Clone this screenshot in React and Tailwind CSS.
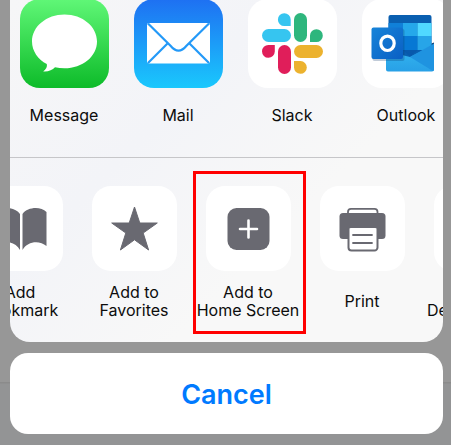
import React from "react";

function MessageIcon() {
  return (
    <svg viewBox="0 0 89 89" className="size-[89px]" aria-hidden="true">
      <defs>
        <linearGradient id="msg" x1="0" y1="0" x2="0" y2="1">
          <stop offset="0" stopColor="#60f777" />
          <stop offset="1" stopColor="#0dbb29" />
        </linearGradient>
      </defs>
      <rect width="89" height="89" rx="20" fill="url(#msg)" />
      <path
        d="M44.500 15.500C26.500 15.500 12 27.500 12 42.500C12 52 18 60.500 26.800 65C27.500 67.500 26 70.500 23.200 72.500C28 73 32.500 71 35 68.300C38 69 41.200 69.300 44.500 69.300C62.500 69.300 77 57.500 77 42.500S62.500 15.500 44.500 15.500Z"
        fill="#fff"
      />
    </svg>
  );
}

function MailIcon() {
  return (
    <svg viewBox="0 0 89 89" className="size-[89px]" aria-hidden="true">
      <defs>
        <linearGradient id="mail" x1="0" y1="0" x2="0" y2="1">
          <stop offset="0" stopColor="#1e70f2" />
          <stop offset="1" stopColor="#1ac8fd" />
        </linearGradient>
      </defs>
      <rect width="89" height="89" rx="20" fill="url(#mail)" />
      <rect x="13" y="24" width="63" height="40.500" rx="2" fill="#fff" />
      <g fill="none" stroke="#2399f8" strokeWidth="2.200">
        <path d="M14 24.500L36.500 46.700Q44.500 56.500 52.500 46.700L75 24.500" />
        <path d="M14 64L33.500 44.500M75 64L55.500 44.500" />
      </g>
    </svg>
  );
}

function SlackIcon() {
  return (
    <svg viewBox="0 0 89 89" className="size-[89px]" aria-hidden="true">
      <rect width="89" height="89" rx="20" fill="#fff" />
      <g fill="#36c5f0">
        <path d="M42.700 27H36.300A6.400 6.400 0 1 1 42.700 20.500Z" />
        <rect x="14" y="30" width="29" height="13" rx="6.500" />
      </g>
      <g fill="#2eb67d">
        <rect x="46" y="14" width="13" height="29" rx="6.500" />
        <path d="M62 43V36.500A6.400 6.400 0 1 1 68.400 43Z" />
      </g>
      <g fill="#e01e5a">
        <path d="M26.800 46V52.500A6.400 6.400 0 1 1 20.400 46Z" />
        <rect x="30" y="46" width="13" height="29" rx="6.500" />
      </g>
      <g fill="#ecb22e">
        <rect x="46" y="46" width="29" height="13" rx="6.500" />
        <path d="M46 62H52.500A6.400 6.400 0 1 1 46 68.500Z" />
      </g>
    </svg>
  );
}

function OutlookIcon() {
  return (
    <svg viewBox="0 0 89 89" className="size-[89px]" aria-hidden="true">
      <defs>
        <linearGradient id="olTile" x1="0" y1="0" x2="1" y2="1">
          <stop offset="0" stopColor="#1784d9" />
          <stop offset="1" stopColor="#0a5fc4" />
        </linearGradient>
        <linearGradient id="olFlap" x1="0" y1="0" x2="0" y2="1">
          <stop offset="0" stopColor="#35b8f1" />
          <stop offset="1" stopColor="#28a0e6" />
        </linearGradient>
      </defs>
      <rect width="89" height="89" rx="20" fill="#fff" />
      <path d="M68 45L72 43.500V50L68 52Z" fill="#123b6d" />
      <path d="M26.500 18A2 2 0 0 1 28.500 16H67.500A2 2 0 0 1 69.500 18V60H26.500Z" fill="#0a5fb0" />
      <path d="M26.500 24H41V37H26.500Z" fill="#1080d8" />
      <path d="M41 24H55.500V37H41Z" fill="#25a8ea" />
      <path d="M55.500 24H69.500V37H55.500Z" fill="#50d9ff" />
      <path d="M26.500 37H41V51H26.500Z" fill="#0864b7" />
      <path d="M41 37H55.500V51H41Z" fill="#0778d4" />
      <path d="M55.500 37H69.500V51H55.500Z" fill="#27a5e8" />
      <path d="M24 52L48 58L72 46V70.500A2 2 0 0 1 70 72.500H26A2 2 0 0 1 24 70.500Z" fill="url(#olFlap)" />
      <path d="M48 58L72 44.500V70.500Q72 71.500 71 72Z" fill="#1f93e0" />
      <path d="M41 51H55.500L48 57.500Z" fill="#0859ac" />
      <rect x="10.500" y="30" width="32" height="32" rx="2" fill="#082f62" opacity=".25" />
      <rect x="9.500" y="28.500" width="31.500" height="31.500" rx="2" fill="url(#olTile)" />
      <ellipse cx="25.500" cy="44.300" rx="6.700" ry="7.200" fill="none" stroke="#fff" strokeWidth="3.200" />
    </svg>
  );
}

function BookIcon() {
  return (
    <svg viewBox="0 0 85 85" className="size-full" fill="#696971" aria-hidden="true">
      <path d="M42 28C37 21 24 20 18 26V60C25 54 37 55 42 64Z" />
      <path d="M44.500 28C49.500 21 62.500 20 68.500 26V60C61.500 54 49.500 55 44.500 64Z" />
    </svg>
  );
}

function StarIcon() {
  return (
    <svg viewBox="0 0 85 85" className="size-full" aria-hidden="true">
      <path
        d="M42.500 21L47.800 37H65.300L51.200 47L56.600 64L42.500 53.800L28.400 64L33.800 47L19.700 37H37.200Z"
        fill="#696971"
        stroke="#696971"
        strokeWidth="1"
        strokeLinejoin="round"
      />
    </svg>
  );
}

function PlusIcon() {
  return (
    <svg viewBox="0 0 85 85" className="size-full" aria-hidden="true">
      <rect x="21.500" y="22" width="42" height="42" rx="9" fill="#696971" />
      <path d="M34 43H51M42.500 34.500V51.500" stroke="#fff" strokeWidth="2.600" strokeLinecap="round" />
    </svg>
  );
}

function PrinterIcon() {
  return (
    <svg viewBox="0 0 85 85" className="size-full" aria-hidden="true">
      <rect x="28" y="22.800" width="29.500" height="14" rx="3" fill="#fff" stroke="#696971" strokeWidth="1.800" />
      <rect x="19.500" y="27" width="46" height="26" rx="3.500" fill="#696971" />
      <rect x="28" y="42" width="30" height="23" rx="3" fill="#fff" />
      <path d="M28.500 42V61.500A3 3 0 0 0 31.500 64.500H54.500A3 3 0 0 0 57.500 61.500V42" fill="none" stroke="#696971" strokeWidth="2" />
      <path d="M33 49H52M33 57H52" stroke="#696971" strokeWidth="1.800" strokeLinecap="round" />
    </svg>
  );
}

const apps = [
  { name: "Message", Icon: MessageIcon },
  { name: "Mail", Icon: MailIcon },
  { name: "Slack", Icon: SlackIcon },
  { name: "Outlook", Icon: OutlookIcon },
];

function Action({ Icon, children, highlighted }) {
  return (
    <button type="button" className="relative flex w-[114px] shrink-0 flex-col items-center">
      <span className="block size-[85px] rounded-[19px] bg-white">{Icon && <Icon />}</span>
      <span className="mt-3 flex h-9 w-full flex-col justify-center text-center text-base leading-[18px] whitespace-nowrap">
        {children}
      </span>
      {highlighted && (
        <span className="pointer-events-none absolute -top-[15px] -right-px left-0.5 h-[163px] border-3 border-[#ff0000]" />
      )}
    </button>
  );
}

export default function App() {
  return (
    <main className="min-h-screen bg-[linear-gradient(#979797_382px,#8b8b8b_382px,#8b8b8b_383px,#939495_384px)] pr-2 pb-2.5 pl-2.5 font-[Inter,Roboto,sans-serif] text-[#0c0c0c]">
      <section className="overflow-hidden rounded-b-[20px] bg-[linear-gradient(135deg,#f6f6f7,#f3f4f8_35%,#f8f8f8_65%)]">
        <div className="-mt-px -ml-[3px] flex">
          {apps.map(({ name, Icon }) => (
            <button key={name} type="button" className="flex w-[114px] shrink-0 flex-col items-center pb-[33px]">
              <Icon />
              <span className="mt-[18px] text-base leading-[18px]">{name}</span>
            </button>
          ))}
        </div>
        <hr className="border-[#c6c6c9]" />
        <div className="-ml-[47px] flex pt-7 pb-[23px]">
          <Action Icon={BookIcon}>
            <span>Add</span>
            <span>Bookmark</span>
          </Action>
          <Action Icon={StarIcon}>
            <span>Add to</span>
            <span>Favorites</span>
          </Action>
          <Action Icon={PlusIcon} highlighted>
            <span>Add to</span>
            <span>Home Screen</span>
          </Action>
          <Action Icon={PrinterIcon}>Print</Action>
          <Action>
            <span className="pt-[18px] pl-2 text-left">De</span>
          </Action>
        </div>
      </section>
      <button
        type="button"
        className="mt-[11px] h-[81px] w-full rounded-[18px] bg-white pt-1 text-[27px] font-semibold text-[#007aff]"
      >
        Cancel
      </button>
    </main>
  );
}
